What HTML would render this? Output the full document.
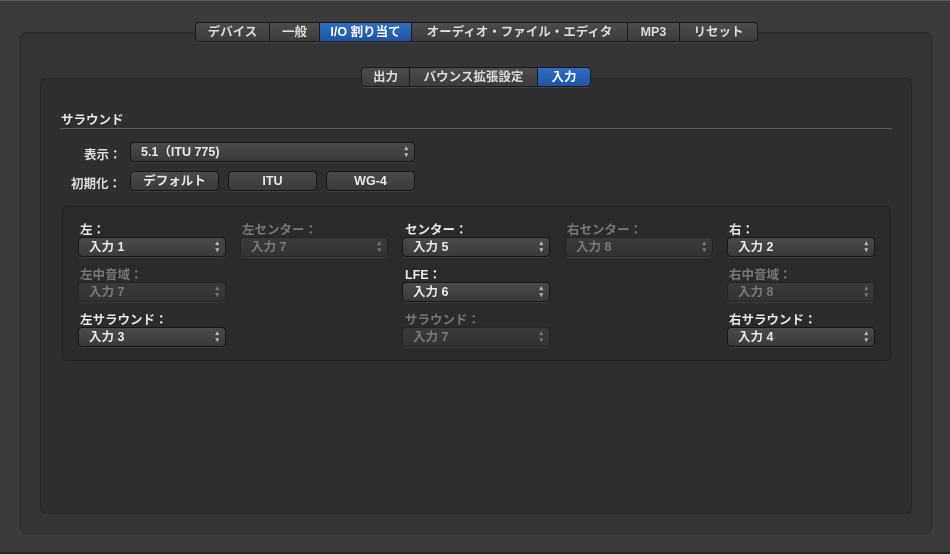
<!DOCTYPE html>
<html><head><meta charset="utf-8"><style>
*{box-sizing:border-box;margin:0;padding:0}
body{width:950px;height:554px;background:#3b3b3b;position:relative;overflow:hidden;font-family:"Liberation Sans","Noto Sans CJK JP",sans-serif;font-size:12px;color:#e6e6e6}
.a{position:absolute}
.box1{left:20px;top:32px;width:912px;height:502px;background:#353535;border:1px solid #2b2b2b;border-radius:7px;box-shadow:inset 0 1px 0 #2e2e2e}
.box2{left:40px;top:78px;width:872px;height:436px;background:#2f2f2f;border:1px solid #262626;border-radius:6px}
.grp{left:62px;top:206px;width:829px;height:155px;background:#2b2b2b;border:1px solid #232323;border-radius:5px}
.tabs{display:flex;height:20px;border:1px solid #1a1a1a;border-radius:4px;overflow:hidden;box-shadow:0 1px 0 #454545}
.tabs div{background:linear-gradient(#4c4c4c,#3c3c3c);color:#dcdcdc;font-weight:bold;font-size:12.5px;line-height:18px;text-align:center;border-right:1px solid #1a1a1a}
.tabs div:last-child{border-right:none}
.tabs div.on{background:linear-gradient(#2f6ec2,#1e55a3);color:#fff}
.pop,.btn{position:absolute;height:20px;border:1px solid #161616;border-radius:4px;background:linear-gradient(#4a4a4a,#3a3a3a);color:#e8e8e8;font-size:12.5px;line-height:18px;box-shadow:0 1px 0 #3f3f3f}
.pop{padding-left:10px;font-weight:bold}
.pop:after{content:"▴\A▾";white-space:pre;position:absolute;right:6px;top:2px;font-size:7px;line-height:7px;color:#bbb}
.btn{text-align:center;font-weight:bold}
.dis{background:linear-gradient(#3a3a3a,#333);border-color:#252525;color:#7a7a7a}
.dis:after{color:#777}
.lb{position:absolute;font-weight:bold;font-size:12.5px;color:#e8e8e8}
.ld{color:#777}
</style></head><body>
<div class="a" style="left:0;top:0;width:950px;height:1px;background:#5a5a5a"></div>
<div class="a box1"></div>
<div class="a box2"></div>
<div class="a tabs" style="left:195px;top:22px;width:563px">
<div style="width:74px">デバイス</div><div style="width:50px">一般</div><div class="on" style="width:92px">I/O 割り当て</div><div style="width:216px">オーディオ・ファイル・エディタ</div><div style="width:52px">MP3</div><div style="flex:1">リセット</div>
</div>
<div class="a tabs" style="left:361px;top:67px;width:230px">
<div style="width:48px">出力</div><div style="width:128px">バウンス拡張設定</div><div class="on" style="flex:1">入力</div>
</div>
<div class="lb" style="left:61px;top:109px">サラウンド</div>
<div class="a" style="left:60px;top:128px;width:832px;height:1px;background:#5a5a5a"></div>
<div class="lb" style="left:84px;top:144px;color:#ddd">表示：</div>
<div class="pop" style="left:130px;top:142px;width:285px">5.1（ITU 775)</div>
<div class="lb" style="left:71px;top:173px;color:#ddd">初期化：</div>
<div class="btn" style="left:130px;top:171px;width:89px">デフォルト</div>
<div class="btn" style="left:228px;top:171px;width:89px">ITU</div>
<div class="btn" style="left:326px;top:171px;width:89px">WG-4</div>
<div class="a grp"></div>
<div class="lb" style="left:80px;top:219px">左：</div>
<div class="pop" style="left:78px;top:237px;width:148px">入力 1</div>
<div class="lb ld" style="left:242px;top:219px">左センター：</div>
<div class="pop dis" style="left:240px;top:237px;width:148px">入力 7</div>
<div class="lb" style="left:405px;top:219px">センター：</div>
<div class="pop" style="left:402px;top:237px;width:148px">入力 5</div>
<div class="lb ld" style="left:567px;top:219px">右センター：</div>
<div class="pop dis" style="left:565px;top:237px;width:148px">入力 8</div>
<div class="lb" style="left:729px;top:219px">右：</div>
<div class="pop" style="left:727px;top:237px;width:148px">入力 2</div>
<div class="lb ld" style="left:80px;top:264px">左中音域：</div>
<div class="pop dis" style="left:78px;top:282px;width:148px">入力 7</div>
<div class="lb" style="left:405px;top:264px">LFE：</div>
<div class="pop" style="left:402px;top:282px;width:148px">入力 6</div>
<div class="lb ld" style="left:729px;top:264px">右中音域：</div>
<div class="pop dis" style="left:727px;top:282px;width:148px">入力 8</div>
<div class="lb" style="left:80px;top:309px">左サラウンド：</div>
<div class="pop" style="left:78px;top:327px;width:148px">入力 3</div>
<div class="lb ld" style="left:405px;top:309px">サラウンド：</div>
<div class="pop dis" style="left:402px;top:327px;width:148px">入力 7</div>
<div class="lb" style="left:729px;top:309px">右サラウンド：</div>
<div class="pop" style="left:727px;top:327px;width:148px">入力 4</div>
<div class="a" style="left:0;top:552px;width:950px;height:2px;background:#1e2a22"></div>
</body></html>
